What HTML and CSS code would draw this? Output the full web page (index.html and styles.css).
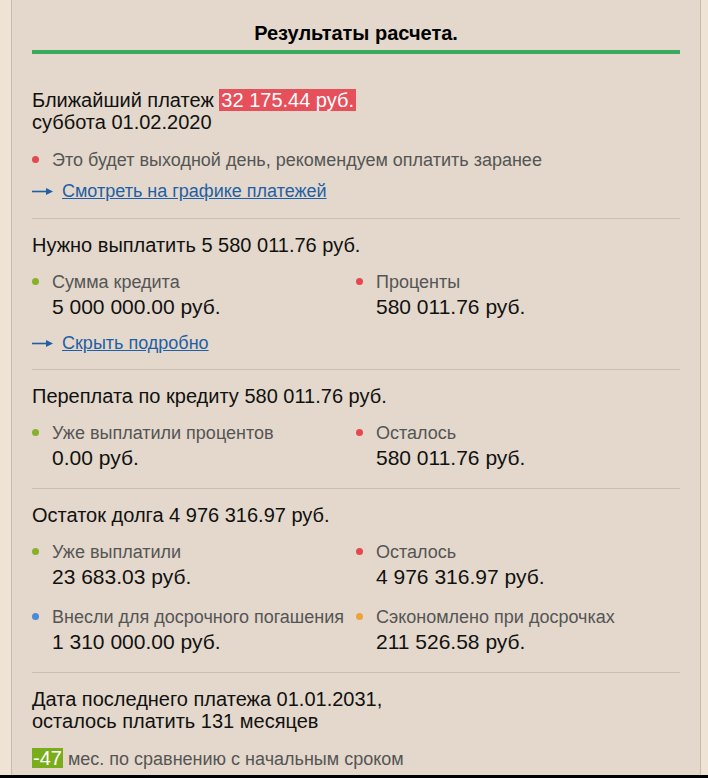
FILE: index.html
```html
<!DOCTYPE html>
<html lang="ru">
<head>
<meta charset="utf-8">
<title>Результаты расчета</title>
<link rel="stylesheet" href="styles.css">
</head>
<body>
<div class="page">
  <div class="panel">
    <h2 class="title">Результаты расчета.</h2>

    <div class="section first">
      <div class="head">Ближайший платеж <span class="hl">32 175.44 руб.</span><br>суббота 01.02.2020</div>
      <div class="note dot-red">Это будет выходной день, рекомендуем оплатить заранее</div>
      <a class="link link-after-note" href="#"><svg class="arrow" width="21" height="9" viewBox="0 0 21 9"><line x1="0" y1="4.5" x2="15" y2="4.5" stroke="#1f5fa6" stroke-width="1.6"/><polygon points="14,1 21,4.5 14,8" fill="#1f5fa6"/></svg><span>Смотреть на графике платежей</span></a>
    </div>

    <div class="section">
      <div class="head">Нужно выплатить 5 580 011.76 руб.</div>
      <div class="grid">
        <div class="item"><div class="label dot-green">Сумма кредита</div><div class="value">5 000 000.00 руб.</div></div>
        <div class="item"><div class="label dot-red">Проценты</div><div class="value">580 011.76 руб.</div></div>
      </div>
      <a class="link link-after-grid" href="#"><svg class="arrow" width="21" height="9" viewBox="0 0 21 9"><line x1="0" y1="4.5" x2="15" y2="4.5" stroke="#1f5fa6" stroke-width="1.6"/><polygon points="14,1 21,4.5 14,8" fill="#1f5fa6"/></svg><span>Скрыть подробно</span></a>
    </div>

    <div class="section grid-end">
      <div class="head">Переплата по кредиту 580 011.76 руб.</div>
      <div class="grid">
        <div class="item"><div class="label dot-green">Уже выплатили процентов</div><div class="value">0.00 руб.</div></div>
        <div class="item"><div class="label dot-red">Осталось</div><div class="value">580 011.76 руб.</div></div>
      </div>
    </div>

    <div class="section grid-end">
      <div class="head">Остаток долга 4 976 316.97 руб.</div>
      <div class="grid">
        <div class="item"><div class="label dot-green">Уже выплатили</div><div class="value">23 683.03 руб.</div></div>
        <div class="item"><div class="label dot-red">Осталось</div><div class="value">4 976 316.97 руб.</div></div>
        <div class="item"><div class="label dot-blue">Внесли для досрочного погашения</div><div class="value">1 310 000.00 руб.</div></div>
        <div class="item"><div class="label dot-orange">Сэкономлено при досрочках</div><div class="value">211 526.58 руб.</div></div>
      </div>
    </div>

    <div class="section last">
      <div class="head">Дата последнего платежа 01.01.2031,<br>осталось платить 131 месяцев</div>
      <div class="diff"><span class="badge">-47</span> мес. по сравнению с начальным сроком</div>
    </div>
  </div>
  <div class="bottom-bar"></div>
</div>
</body>
</html>
```

FILE: styles.css
```css
html, body {
  margin: 0;
  padding: 0;
}
body {
  background: #efe3d6;
  font-family: "Liberation Sans", Arial, sans-serif;
  color: #111;
}
.page {
  height: 778px;
  display: flex;
  flex-direction: column;
  overflow: hidden;
}
.panel {
  flex: 1;
  margin-left: 11px;
  width: 648px;
  padding: 0 20px;
  background: #e3d8cb;
  border-left: 1px solid #c8bbae;
  border-right: 1px solid #c8bbae;
  overflow: hidden;
}
.bottom-bar {
  height: 3px;
  background: #000;
}
.title {
  margin: 0;
  padding: 23px 0 6px;
  font-size: 20px;
  line-height: 21px;
  font-weight: bold;
  text-align: center;
  color: #000;
  border-bottom: 4px solid #3ca95c;
}
.section {
  border-top: 1px solid #c9bdb0;
  padding: 15px 0 15px;
}
.section.first {
  border-top: none;
  padding-top: 35px;
  padding-bottom: 16px;
}
.section.grid-end {
  padding-bottom: 17px;
}
.head {
  font-size: 20px;
  line-height: 22px;
  color: #111;
}
.hl {
  background: #e5505a;
  color: #fff;
  padding: 0 2px;
}
.note, .label, .diff {
  font-size: 18px;
  line-height: 22px;
  color: #555;
}
.note {
  margin-top: 16px;
  padding-left: 20px;
}
.note::before, .label::before {
  content: "";
  display: inline-block;
  width: 7px;
  height: 7px;
  border-radius: 50%;
  margin-left: -20px;
  margin-right: 13px;
  vertical-align: 3px;
}
.dot-red::before { background: #e5484f; }
.dot-green::before { background: #87b12b; }
.dot-blue::before { background: #4a8ad6; }
.dot-orange::before { background: #eda33a; }
.link {
  display: flex;
  align-items: center;
  font-size: 18px;
  line-height: 22px;
  color: #1f5fa6;
  text-decoration: none;
}
.link span {
  text-decoration: underline;
}
.arrow {
  margin-right: 9px;
  flex: none;
}
.link-after-note { margin-top: 9px; }
.link-after-grid { margin-top: 12px; }
.grid {
  margin-top: 15px;
  display: grid;
  grid-template-columns: 324px 324px;
  row-gap: 16px;
}
.item {
  padding-left: 20px;
}
.label {
  line-height: 23px;
}
.value {
  font-size: 21px;
  line-height: 26px;
  color: #111;
}
.diff {
  margin-top: 16px;
}
.badge {
  display: inline-block;
  background: #7aad1c;
  color: #fff;
  font-size: 20px;
  line-height: 20px;
  padding: 0 1px;
}
```
